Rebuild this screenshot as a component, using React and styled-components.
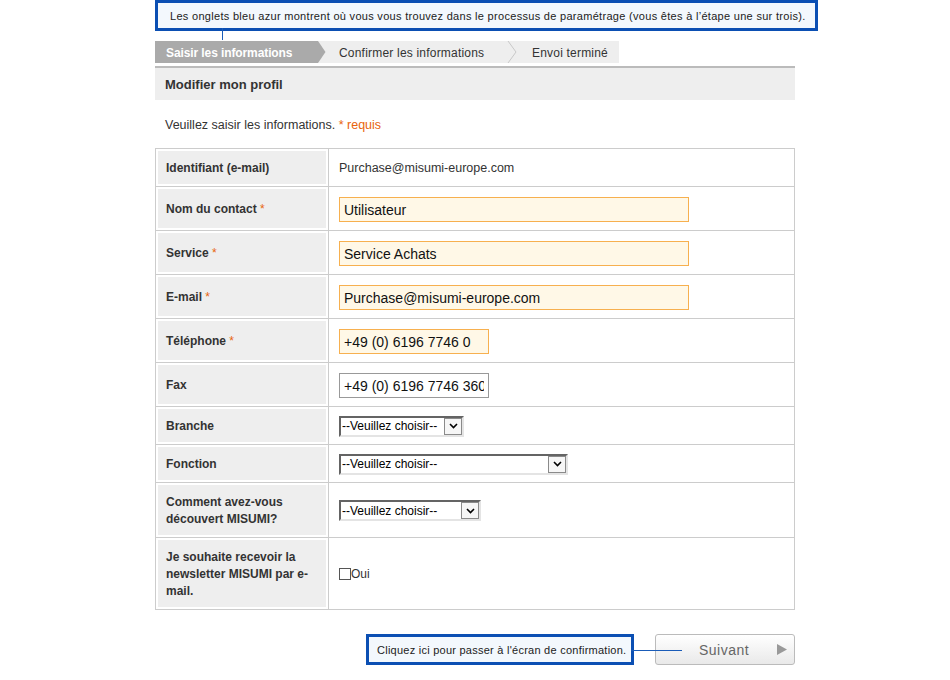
import React from 'react';
import styled, { createGlobalStyle } from 'styled-components';

const GlobalStyle = createGlobalStyle`
  body {
    margin: 0;
    background: #fff;
    font-family: "Liberation Sans", Arial, sans-serif;
    color: #333;
  }
`;

const Page = styled.div`
  width: 640px;
  margin: 0 auto;
`;

const Callout = styled.div`
  position: relative;
  box-sizing: border-box;
  display: flex;
  align-items: center;
  width: ${(props) => props.width}px;
  height: 31px;
  padding-left: ${(props) => props.pad}px;
  border: 3px solid #0b4fb3;
  background: #f3f8fd;
  font-size: 11px;
  letter-spacing: ${(props) => props.spacing}px;
  color: #222;
  white-space: nowrap;

  &::after {
    content: '';
    position: absolute;
    z-index: 2;
    background: #1a5cb8;
    ${(props) =>
      props.pointer === 'down'
        ? 'left: 64px; top: 100%; width: 1px; height: 12px;'
        : 'left: 100%; top: 50%; width: 51px; height: 1px;'}
  }
`;

const Steps = styled.div`
  display: flex;
  width: 464px;
  height: 22px;
  margin-top: 10px;
  background: #eee;
`;

const Step = styled.div`
  box-sizing: border-box;
  display: flex;
  align-items: center;
  width: ${(props) => props.width}px;
  padding: 1px 0 0 ${(props) => props.pad}px;
  font-size: 12px;
  font-weight: ${(props) => (props.active ? 'bold' : 'normal')};
  letter-spacing: ${(props) => (props.active ? '-0.1px' : '0.2px')};
  color: ${(props) => (props.active ? '#fff' : '#333')};
  background: ${(props) => (props.active ? '#aaa' : 'transparent')};
`;

const Rule = styled.div`
  height: 2px;
  margin-top: 3px;
  background: #bbb;
`;

const Heading = styled.h1`
  margin: 0;
  height: 32px;
  padding-left: 10px;
  display: flex;
  align-items: center;
  background: #eee;
  font-size: 13px;
  font-weight: bold;
  color: #333;
`;

const Intro = styled.p`
  margin: 16px 0 14px 10px;
  font-size: 12.5px;
  line-height: 18px;
  color: #333;
`;

const Required = styled.span`
  color: #e8640c;
  font-weight: normal;
`;

const FormTable = styled.table`
  width: 640px;
  border-collapse: collapse;
  table-layout: fixed;
`;

const Row = styled.tr`
  height: ${(props) => props.h}px;
`;

const Label = styled.th`
  width: 152px;
  padding: 2px 10px 0;
  border: 1px solid #ccc;
  background: #eee;
  box-shadow: inset 0 0 0 2px #fff;
  text-align: left;
  vertical-align: middle;
  font-size: 12px;
  line-height: 17px;
  font-weight: bold;
  color: #333;
`;

const Value = styled.td`
  padding: 1px 10px 0;
  border: 1px solid #ccc;
  vertical-align: middle;
  font-size: 12.5px;
  color: #333;
`;

const TextInput = styled.input`
  display: block;
  box-sizing: border-box;
  width: ${(props) => props.width}px;
  height: 25px;
  margin: 0;
  padding: 1px 4px 0;
  border: 1px solid ${(props) => (props.plain ? '#999' : '#f7b04f')};
  background: ${(props) => (props.plain ? '#fff' : '#fff8e7')};
  font-family: "Liberation Sans", Arial, sans-serif;
  font-size: 14px;
  color: #111;
  outline: none;
`;

const SelectBox = styled.div`
  box-sizing: border-box;
  display: flex;
  align-items: center;
  width: ${(props) => props.width}px;
  height: 21px;
  border-top: 2px solid #646464;
  border-left: 2px solid #646464;
  border-right: 2px solid #e4e4e4;
  border-bottom: 2px solid #e4e4e4;
  background: #fff;
`;

const SelectText = styled.span`
  flex: 1;
  padding-left: 1px;
  font-size: 12px;
  color: #000;
`;

const SelectButton = styled.span`
  box-sizing: border-box;
  display: flex;
  align-items: center;
  justify-content: center;
  width: 18px;
  height: 17px;
  border: 1px solid #8a8a8a;
  background: #f6f6f6;
`;

const CheckLabel = styled.label`
  display: flex;
  align-items: center;
  font-size: 12px;
  color: #333;
`;

const Check = styled.input`
  appearance: none;
  width: 12px;
  height: 12px;
  margin: 0;
  border: 1px solid #555;
  background: #fff;
`;

const Footer = styled.div`
  display: flex;
  justify-content: flex-end;
  align-items: center;
  gap: 21px;
  margin-top: 24px;
`;

const NextButton = styled.button`
  box-sizing: border-box;
  display: flex;
  align-items: center;
  justify-content: space-between;
  width: 140px;
  height: 31px;
  padding: 0 7px 0 43px;
  border: 1px solid #bbb;
  border-radius: 3px;
  background: linear-gradient(#fff, #e9e9e9);
  font-family: "Liberation Sans", Arial, sans-serif;
  font-size: 14px;
  letter-spacing: 0.5px;
  color: #666;
`;

const Chevron = ({ active }) => (
  <svg width="10" height="22" viewBox="0 0 10 22">
    {active ? (
      <polygon points="0,0 2,0 9.5,11 2,22 0,22" fill="#aaa" />
    ) : (
      <polyline points="1,0 9,11 1,22" fill="none" stroke="#c8c8c8" strokeWidth="1" />
    )}
  </svg>
);

const FakeSelect = ({ width }) => (
  <SelectBox width={width}>
    <SelectText>--Veuillez choisir--</SelectText>
    <SelectButton>
      <svg width="9" height="6" viewBox="0 0 9 6">
        <polyline points="1,1 4.5,4.5 8,1" fill="none" stroke="#000" strokeWidth="1.6" />
      </svg>
    </SelectButton>
  </SelectBox>
);

const rows = [
  { label: 'Identifiant (e-mail)', h: 38, text: 'Purchase@misumi-europe.com' },
  { label: 'Nom du contact', req: true, h: 44, input: 'Utilisateur', w: 350 },
  { label: 'Service', req: true, h: 44, input: 'Service Achats', w: 350 },
  { label: 'E-mail', req: true, h: 44, input: 'Purchase@misumi-europe.com', w: 350 },
  { label: 'Téléphone', req: true, h: 44, input: '+49 (0) 6196 7746 0', w: 150 },
  { label: 'Fax', h: 44, input: '+49 (0) 6196 7746 360', w: 150, plain: true },
  { label: 'Branche', h: 38, select: 125 },
  { label: 'Fonction', h: 38, select: 229 },
  { label: 'Comment avez-vous découvert MISUMI?', h: 55, select: 142 },
  { label: 'Je souhaite recevoir la newsletter MISUMI par e-mail.', h: 72, check: true },
];

const renderValue = (row) => {
  if (row.input)
    return <TextInput width={row.w} plain={row.plain} defaultValue={row.input} />;
  if (row.select) return <FakeSelect width={row.select} />;
  if (row.check)
    return (
      <CheckLabel>
        <Check type="checkbox" />
        Oui
      </CheckLabel>
    );
  return row.text;
};

export default function App() {
  return (
    <>
      <GlobalStyle />
      <Page>
        <Callout width={663} pad={12} spacing={0.3} pointer="down">
          Les onglets bleu azur montrent où vous vous trouvez dans le processus de paramétrage (vous êtes à l’étape une sur trois).
        </Callout>

        <Steps>
          <Step active width={161} pad={11}>Saisir les informations</Step>
          <Chevron active />
          <Step width={181} pad={13}>Confirmer les informations</Step>
          <Chevron />
          <Step width={102} pad={15}>Envoi terminé</Step>
        </Steps>

        <Rule />
        <Heading>Modifier mon profil</Heading>
        <Intro>
          Veuillez saisir les informations. <Required>* requis</Required>
        </Intro>

        <FormTable>
          <tbody>
            {rows.map((row) => (
              <Row key={row.label} h={row.h}>
                <Label>
                  {row.label}
                  {row.req && <Required> *</Required>}
                </Label>
                <Value>{renderValue(row)}</Value>
              </Row>
            ))}
          </tbody>
        </FormTable>

        <Footer>
          <Callout width={268} pad={8} spacing={0.25} pointer="right">
            Cliquez ici pour passer à l'écran de confirmation.
          </Callout>
          <NextButton type="button">
            Suivant
            <svg width="10" height="11" viewBox="0 0 10 11">
              <polygon points="0,0 10,5.5 0,11" fill="#999" />
            </svg>
          </NextButton>
        </Footer>
      </Page>
    </>
  );
}
